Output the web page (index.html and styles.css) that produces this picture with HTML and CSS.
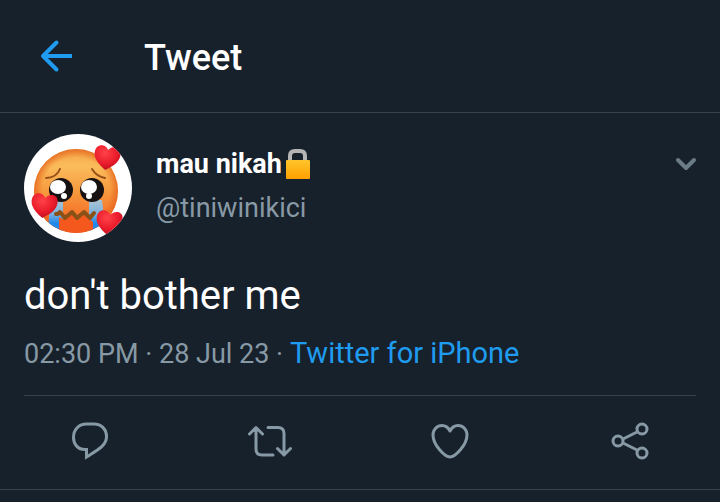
FILE: index.html
```html
<!DOCTYPE html>
<html lang="en">
<head>
<meta charset="utf-8">
<meta name="viewport" content="width=device-width, initial-scale=1">
<title>Tweet</title>
<link rel="stylesheet" href="styles.css">
</head>
<body>
<header class="topbar">
  <button class="icon-button" type="button" aria-label="Back">
    <svg class="back" width="36" height="36" viewBox="0 0 36 36"><path d="M34 18H4"/><path d="M18.500 4.500 5 18l13.500 13.500" stroke-linecap="round" stroke-linejoin="round"/></svg>
  </button>
  <h1 class="title">Tweet</h1>
</header>
<main class="tweet">
  <div class="author">
    <svg class="avatar" viewBox="9 9 108 108" role="img" aria-label="Profile picture">
      <defs>
        <linearGradient id="face" x1="0" y1="0" x2="0" y2="1"><stop offset="0" stop-color="#f2a044"/><stop offset=".2" stop-color="#fbbd5c"/><stop offset=".5" stop-color="#f79a3e"/><stop offset="1" stop-color="#f4581c"/></linearGradient>
        <radialGradient id="edge"><stop offset=".8" stop-color="#e8641a" stop-opacity="0"/><stop offset="1" stop-color="#e2601c" stop-opacity=".75"/></radialGradient>
        <linearGradient id="tear" x1="0" y1="0" x2="0" y2="1"><stop offset="0" stop-color="#a9c4d4"/><stop offset=".4" stop-color="#7fb2dc"/><stop offset=".7" stop-color="#2389e8"/></linearGradient>
        <radialGradient id="red" cx=".4" cy=".3" r=".75"><stop offset="0" stop-color="#ff4248"/><stop offset=".6" stop-color="#ea1c2b"/><stop offset="1" stop-color="#b90d20"/></radialGradient>
        <clipPath id="disc"><circle cx="63" cy="63" r="54"/></clipPath>
        <clipPath id="head"><circle cx="61" cy="66" r="42"/></clipPath>
        <path id="love" d="M0 12C-8 7-13 2-13-4c0-5 3-8 7-8 3 0 5 2 6 4 1-2 4-4 7-4 4 0 6 3 6 7C13 2 8 7 0 12Z"/>
      </defs>
      <g clip-path="url(#disc)">
        <rect x="9" y="9" width="108" height="108" fill="#fff"/>
        <circle cx="61" cy="66" r="42" fill="url(#face)"/>
        <circle cx="61" cy="66" r="42" fill="url(#edge)"/>
        <g clip-path="url(#head)">
          <path d="M35 75h13v33H33Z" fill="url(#tear)"/>
          <path d="M74 75h13l4 33H74Z" fill="url(#tear)"/>
          <path d="M44 92l6 3 7-6 5 5 6-5 6 5 4 3v11H44Z" fill="#f4581c"/>
        </g>
        <path d="M41 89q3 0 4-2l5 6 7-6 5 6 7-6 6 6 4-5" fill="none" stroke="#8a5016" stroke-width="4" stroke-linejoin="round" stroke-linecap="round"/>
        <path d="M31 53c7 0 12-4 14-9M77 44c3 5 7 8 13 9" fill="none" stroke="#96501b" stroke-width="2" stroke-linecap="round"/>
        <circle cx="46" cy="65" r="12" fill="#171112"/>
        <circle cx="77" cy="65" r="12" fill="#171112"/>
        <ellipse cx="43" cy="62" rx="8" ry="7" fill="#fff"/>
        <ellipse cx="74" cy="62" rx="8" ry="7" fill="#fff"/>
        <circle cx="49" cy="71" r="3" fill="#fff"/>
        <circle cx="74" cy="71" r="3" fill="#fff"/>
        <use href="#love" transform="translate(92 33) rotate(8)" fill="url(#red)"/>
        <use href="#love" transform="translate(29 81) rotate(8)" fill="url(#red)"/>
        <use href="#love" transform="translate(94 98) rotate(8)" fill="url(#red)"/>
      </g>
    </svg>
    <div class="names">
      <div class="name">mau nikah<svg class="lock" width="26" height="32" viewBox="0 0 26 32" role="img" aria-label="Locked">
        <defs><linearGradient id="gold" x1="0" y1="0" x2="0" y2="1"><stop offset="0" stop-color="#ffc52b"/><stop offset="1" stop-color="#ffa000"/></linearGradient></defs>
        <path d="M5 14V8q0-5 5-5h5q5 0 5 5v6" fill="none" stroke="#b5b5b5" stroke-width="4"/>
        <rect x="1" y="12" width="24" height="19" rx="1" fill="url(#gold)"/>
      </svg></div>
      <div class="handle">@tiniwinikici</div>
    </div>
    <button class="icon-button more" type="button" aria-label="More options">
      <svg width="24" height="16" viewBox="0 0 24 16"><path d="M4 4l8 8 8-8" stroke-linecap="round" stroke-linejoin="round"/></svg>
    </button>
  </div>
  <p class="message">don't bother me</p>
  <p class="meta">02:30 PM · 28 Jul 23 · <a href="#">Twitter for iPhone</a></p>
</main>
<nav class="actions" aria-label="Tweet actions">
  <button class="icon-button" type="button" aria-label="Reply">
    <svg width="44" height="44" viewBox="0 0 44 44"><path d="M18.500 38v-7.500H17C10 30.500 5.500 25.500 5.500 18.500 5.500 10.500 11 5 18.500 5H26c7.500 0 12.500 5.500 12.500 12.500 0 9-8 13-20 20.500Z" stroke-linejoin="miter"/></svg>
  </button>
  <button class="icon-button" type="button" aria-label="Retweet">
    <svg width="44" height="44" viewBox="0 0 44 44" stroke-linecap="round" stroke-linejoin="round"><path d="M1.500 15 8 8.500l6.500 6.500M8 9v21q0 6 6 6h11M20 8.500h10q6 0 6 6V36M29.500 29.500 36 36l6.500-6.500"/></svg>
  </button>
  <button class="icon-button" type="button" aria-label="Like">
    <svg width="44" height="44" viewBox="0 0 44 44"><path d="M22 12C20 8 17 6.500 14 6.500 9 6.500 5 10.500 5 16c0 10 12 22 17 22s17-12 17-22c0-5.500-4-9.500-9-9.500-3 0-6 1.500-8 5.500Z" stroke-linejoin="round"/></svg>
  </button>
  <button class="icon-button" type="button" aria-label="Share">
    <svg width="44" height="44" viewBox="0 0 44 44"><circle cx="10" cy="22" r="5"/><circle cx="34" cy="10" r="5"/><circle cx="34" cy="34" r="5"/><path d="M15 20l14-7M15 24l14 7"/></svg>
  </button>
</nav>
</body>
</html>
```
FILE: styles.css
```css
* { box-sizing: border-box; }

body {
  margin: 0;
  background: #17212b;
  color: #fff;
  font-family: Roboto, "Liberation Sans", sans-serif;
}

h1, p { margin: 0; }

a { color: #1f9bf0; text-decoration: none; }

svg { display: block; }

.icon-button {
  display: flex;
  align-items: center;
  justify-content: center;
  padding: 0;
  border: 0;
  background: none;
  color: #8899a6;
  cursor: pointer;
}

.icon-button svg {
  fill: none;
  stroke: currentColor;
  stroke-width: 3;
}

.icon-button .back {
  color: #1f9bf0;
  stroke-width: 4;
}

.topbar {
  display: flex;
  align-items: center;
  gap: 70px;
  padding: 32px 38px;
  border-bottom: 1px solid #38444d;
}

.title {
  padding-top: 4px;
  font-size: 36px;
  font-weight: 500;
  line-height: 44px;
}

.topbar .icon-button { height: 48px; }

.tweet {
  margin: 0 24px;
  padding: 21px 0 23px;
  border-bottom: 1px solid #38444d;
}

.author {
  display: flex;
  align-items: flex-start;
  gap: 24px;
}

.avatar { width: 108px; height: 108px; }

.names {
  flex: 1;
  padding-top: 12px;
}

.name {
  display: flex;
  align-items: center;
  gap: 3px;
  font-size: 27px;
  font-weight: 700;
  line-height: 36px;
}

.handle {
  margin-top: 8px;
  color: #8899a6;
  font-size: 27px;
  line-height: 36px;
}

.more {
  padding-top: 22px;
  margin-right: -2px;
  color: #6b7b88;
}

.more svg { stroke-width: 4; }

.message {
  margin-top: 30px;
  font-size: 40px;
  line-height: 48px;
}

.meta {
  margin-top: 15px;
  color: #8899a6;
  font-size: 27px;
  line-height: 36px;
}

.meta a { font-size: 29px; }

.actions {
  display: grid;
  grid-template-columns: repeat(4, 1fr);
  padding: 23px 0 26px;
  border-bottom: 1px solid #38444d;
}
```
